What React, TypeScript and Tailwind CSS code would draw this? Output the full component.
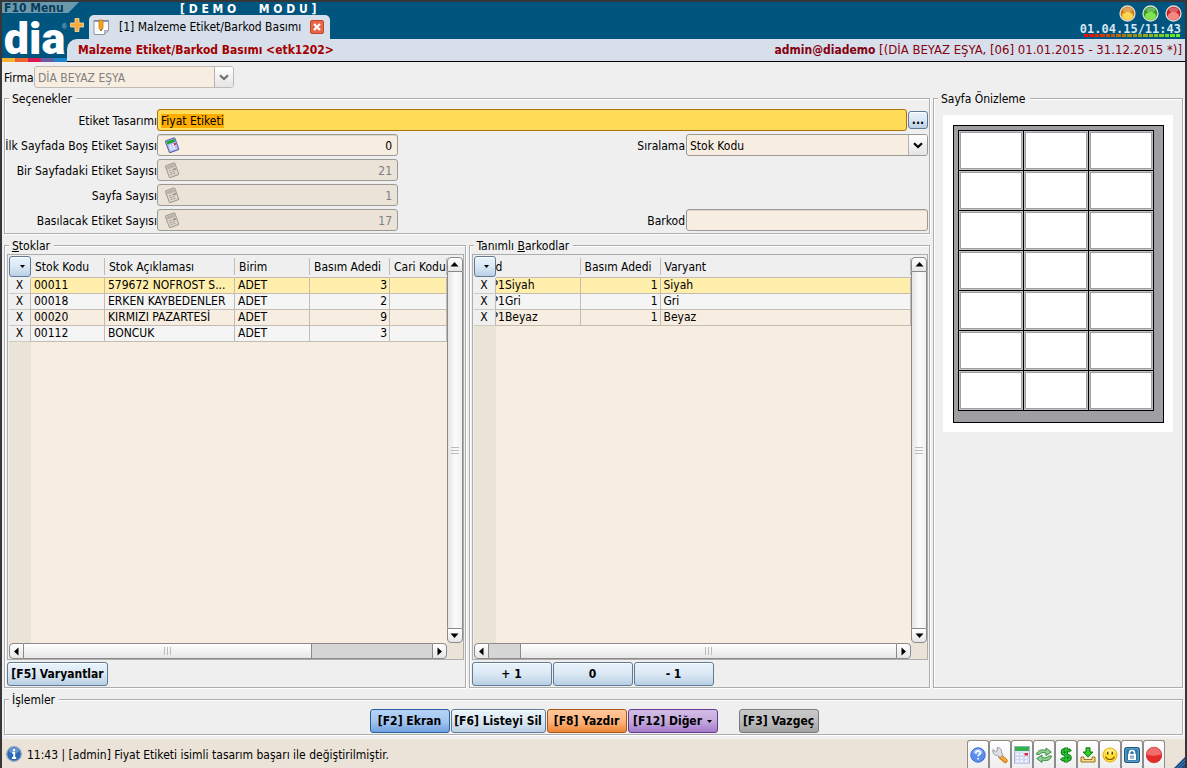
import { useEffect, useRef } from "react";
import type { ReactNode } from "react";

const bevel =
  "border border-[#adadad] shadow-[1px_1px_0_#fff,inset_1px_1px_0_#fff]";
const field =
  "h-[22px] w-full rounded-[3px] border border-[#9c9a96] outline-none";
const blueBtn =
  "rounded-[3px] border border-[#5f7a94] bg-gradient-to-b from-[#e9f3fb] via-[#dbe8f4] to-[#b9cfe4] font-bold shadow-[inset_0_1px_0_#fff]";
const label = "flex justify-end whitespace-nowrap pt-0.5";

function Group({
  title,
  className,
  children,
}: {
  title: ReactNode;
  className?: string;
  children: ReactNode;
}) {
  return (
    <fieldset className={`min-w-0 pl-0.5 pr-px ${bevel} ${className ?? ""}`}>
      <legend className="relative ml-0.5 h-[14px] bg-[#efefef] pl-[3px] pr-1 leading-[16px]">
        {title}
      </legend>
      {children}
    </fieldset>
  );
}

function NoteIcon({ muted }: { muted?: boolean }) {
  const edge = muted ? "#a09b92" : "#5560a8";
  return (
    <svg width="16" height="16" viewBox="0 0 16 16" aria-hidden="true">
      <g transform="rotate(-20 8 8)">
        <rect x="3" y="2" width="10" height="12.5" rx="1" fill={muted ? "#dcd6cb" : "#b4befa"} stroke={edge} />
        <rect x="4" y="3" width="8" height="3" fill={muted ? "#b8b3aa" : "#1ea82c"} />
        <path d="M5 8h2M8 8h2M5 10h2M8 10h2M5 12h2M8 12h2" stroke={muted ? "#aaa59b" : "#fff"} strokeWidth="1.2" />
        <path d="M10 8h2" stroke={muted ? "#918c84" : "#e0202c"} strokeWidth="2" />
      </g>
    </svg>
  );
}

function NumberRow({
  id,
  text,
  value,
  disabled,
}: {
  id: string;
  text: string;
  value: string;
  disabled?: boolean;
}) {
  return (
    <>
      <label htmlFor={id} className={label}>
        {text}
      </label>
      <div
        className={`flex items-center pl-1.5 pr-[5px] ${field} ${
          disabled
            ? "bg-[#ebe3d7] text-[#808080]"
            : "bg-[#f7eee1] text-black shadow-[inset_0_1px_0_#ddd5c8]"
        }`}
      >
        <NoteIcon muted={disabled} />
        <input
          id={id}
          defaultValue={value}
          disabled={disabled}
          className="min-w-0 flex-1 bg-transparent pt-0.5 text-right outline-none"
        />
      </div>
    </>
  );
}

const arrows = {
  up: "M2.500 8.500h8L6.500 4z",
  down: "M2.500 4.500h8L6.500 9z",
  left: "M8.500 2.500v8L4 6.500z",
  right: "M4.500 2.500v8L9 6.500z",
};

function ArrowButton({ dir, className }: { dir: keyof typeof arrows; className: string }) {
  return (
    <button
      type="button"
      aria-label={dir}
      className={`flex shrink-0 items-center justify-center border border-[#8a8a8a] from-white to-[#e6e6e6] ${className}`}
    >
      <svg width="13" height="13" viewBox="0 0 13 13" aria-hidden="true">
        <path d={arrows[dir]} fill="#000" />
      </svg>
    </button>
  );
}

function VScroll() {
  return (
    <div className="mt-0.5 flex w-4 shrink-0 flex-col">
      <ArrowButton dir="up" className="h-[15px] rounded-t-[4px] bg-gradient-to-b" />
      <div className="flex flex-1 flex-col items-center justify-center gap-0.5 border-x border-[#8a8a8a] bg-gradient-to-r from-[#e4e4e4] via-[#fbfbfb] to-[#f0f0f0]">
        <i className="h-px w-2 bg-[#bbb]" />
        <i className="h-px w-2 bg-[#bbb]" />
        <i className="h-px w-2 bg-[#bbb]" />
      </div>
      <ArrowButton dir="down" className="h-[15px] rounded-b-[4px] bg-gradient-to-b" />
    </div>
  );
}

function Thumb({ className }: { className: string }) {
  return (
    <div
      className={`flex items-center justify-center gap-0.5 bg-gradient-to-b from-white to-[#e6e6e6] ${className}`}
    >
      <i className="h-2 w-px bg-[#bbb]" />
      <i className="h-2 w-px bg-[#bbb]" />
      <i className="h-2 w-px bg-[#bbb]" />
    </div>
  );
}

function HScroll({ children }: { children: ReactNode }) {
  return (
    <div className="flex h-4 shrink-0 bg-[#ebe3d7] pr-4">
      <ArrowButton dir="left" className="w-[15px] rounded-l-[4px] bg-gradient-to-b" />
      <div className="flex flex-1 border-y border-[#8a8a8a] bg-[#d6d6d6]">{children}</div>
      <ArrowButton dir="right" className="w-[15px] rounded-r-[4px] bg-gradient-to-b" />
    </div>
  );
}

type Col = { name: string; width: string; right?: boolean };

function Grid({
  name,
  cols,
  rows,
  clipFirst,
  scroll,
}: {
  name: string;
  cols: Col[];
  rows: string[][];
  clipFirst?: boolean;
  scroll: ReactNode;
}) {
  const tones = ["bg-[#ffeeac]", "bg-[#f5f5f5]", "bg-[#f7eee1]", "bg-[#f5f5f5]"];
  return (
    <div className="flex min-h-0 flex-1 flex-col border border-[#adadad] pl-px">
      <div className="flex min-h-0 flex-1">
        <div className="flex min-w-0 flex-1 flex-col overflow-hidden bg-[#f7eee1]">
          <table aria-label={name} className="w-full table-fixed border-separate border-spacing-0">
            <colgroup>
              <col className="w-[22px]" />
              {cols.map((c) => (
                <col key={c.name} className={c.width} />
              ))}
            </colgroup>
            <thead>
              <tr className="h-[23px] bg-[#efefef]">
                <th className="p-0">
                  <button
                    type="button"
                    aria-label="Menü"
                    className={`flex h-[21px] w-[22px] items-center justify-center pl-1 ${blueBtn}`}
                  >
                    <svg width="5" height="3" viewBox="0 0 5 3" aria-hidden="true">
                      <path d="M0 0h5L2.5 3z" fill="#000" />
                    </svg>
                  </button>
                </th>
                {cols.map((c, i) => (
                  <th
                    key={c.name}
                    className="border-b border-[#c3bcb2] p-0 text-left font-normal"
                  >
                    <span
                      className={`block whitespace-nowrap border-r border-[#c3bcb2] pt-0.5 leading-[15px] ${
                        clipFirst && i === 0 ? "" : "pl-1"
                      }`}
                    >
                      {c.name}
                    </span>
                  </th>
                ))}
              </tr>
            </thead>
            <tbody>
              {rows.map((r, n) => (
                <tr key={r[0]} className={`h-4 leading-[15px] ${tones[n]}`}>
                  <td className="border-b border-r border-b-[#d0cbc2] border-r-[#c3bcb2] bg-[#f0f0f0] p-0 text-center">
                    X
                  </td>
                  {cols.map((c, i) => (
                    <td
                      key={c.name}
                      className={`overflow-hidden whitespace-nowrap border-b border-r border-[#c3bcb2] p-0 ${
                        c.right ? "pr-0.5 text-right" : clipFirst && i === 0 ? "" : "pl-[3px]"
                      }`}
                    >
                      {clipFirst && i === 0 ? <span className="-ml-1">{r[i]}</span> : r[i]}
                    </td>
                  ))}
                </tr>
              ))}
            </tbody>
          </table>
          <div className="w-[22px] flex-1 bg-[#ebe3d7]" />
        </div>
        <VScroll />
      </div>
      <HScroll>{scroll}</HScroll>
    </div>
  );
}

const statusIcons: { name: string; art: ReactNode }[] = [
  {
    name: "Yardım",
    art: (
      <>
        <circle cx="8" cy="8" r="7.2" fill="#5b8def" stroke="#3c68cf" />
        <ellipse cx="8" cy="4.8" rx="5" ry="3" fill="#a9c6fb" opacity=".6" />
        <path d="M5.8 6.2c0-3 4.600-3 4.600-.2 0 1.700-2.300 1.600-2.300 3.500M8.100 11v1.600" stroke="#fff" strokeWidth="1.700" fill="none" />
      </>
    ),
  },
  {
    name: "Ayarlar",
    art: (
      <>
        <path d="M8.500 9.500l4.800 4.200" stroke="#c97a15" strokeWidth="4.600" strokeLinecap="round" />
        <path d="M8.800 9.500l4.500 3.900" stroke="#f7a83c" strokeWidth="2.800" strokeLinecap="round" />
        <path d="M1 2.500l2.500 2.200 2-1.200L5 .7c3-.4 5 2 4.300 4.500l1.700 2.600-3 2.700-2.500-2.200C3 9 .2 6.500 1 2.500z" fill="#dfe2e6" stroke="#8a8f96" strokeWidth=".9" />
      </>
    ),
  },
  {
    name: "Hesap Makinesi",
    art: (
      <>
        <rect x=".5" y="-1" width="15" height="18" fill="#dfe4fa" stroke="#aab2dd" />
        <rect x="1" y="-.5" width="14" height="4.500" fill="#35b04a" />
        <g fill="#fff" stroke="#b6bee6" strokeWidth=".5">
          <rect x="2" y="6" width="3" height="2.500" /><rect x="6" y="6" width="3" height="2.500" />
          <rect x="2" y="9.500" width="3" height="2.500" /><rect x="6" y="9.500" width="3" height="2.500" /><rect x="10.500" y="9.500" width="3" height="2.500" />
          <rect x="2" y="13" width="3" height="2.500" /><rect x="6" y="13" width="3" height="2.500" /><rect x="10.500" y="13" width="3" height="2.500" />
        </g>
        <rect x="10.500" y="6" width="3.500" height="2.500" fill="#e8283a" />
      </>
    ),
  },
  {
    name: "Yenile",
    art: (
      <g fill="#8fce8c" stroke="#2f8440" strokeWidth=".9" strokeLinejoin="round">
        <path d="M.6 7.500C1 3.500 5.500 2 10 3.400V1l5.300 4-5.300 3.500V6.200C7 5 4.500 5.500 3.500 7.500z" />
        <path d="M15.400 9c-.4 4-4.900 5.500-9.400 4.100v2.400L.7 11.500 6 8v2.300c3 1.200 5.500.7 6.500-1.300z" />
      </g>
    ),
  },
  {
    name: "Kasa",
    art: (
      <>
        <path d="M12.500 4.500C11 2.500 4.500 2 4.500 5.300c0 3.400 7.500 1.800 7.500 5.200 0 3.500-7 3-8.500.5M8.200.5v15" fill="none" stroke="#0b6b12" strokeWidth="3.600" />
        <path d="M12.200 4.500C11 2.700 4.500 2 4.500 5.300c0 3.400 7.500 1.800 7.500 5.200 0 3.500-7 3-8.300.5M8.200 1v14" fill="none" stroke="#22c02c" strokeWidth="1.900" />
      </>
    ),
  },
  {
    name: "İndir",
    art: (
      <>
        <path d="M1 10v5h14v-5h-3v2.500H4V10z" fill="#f3d98a" stroke="#9b7415" />
        <path d="M6 .8h4V5h3L8 10.200 3 5h3z" fill="#2fc92a" stroke="#14790f" />
      </>
    ),
  },
  {
    name: "Geri Bildirim",
    art: (
      <>
        <circle cx="8" cy="8" r="7" fill="#ffdf35" stroke="#e8a812" />
        <ellipse cx="8" cy="4.500" rx="4.500" ry="2.500" fill="#fff6a8" opacity=".7" />
        <path d="M5.700 4.800v2.700M10.300 4.800v2.700" stroke="#5b4300" strokeWidth="1.500" />
        <path d="M3.500 9.500c1.500 4 7.500 4 9 0" fill="none" stroke="#8a5a00" strokeWidth="1.100" />
      </>
    ),
  },
  {
    name: "Kilitle",
    art: (
      <>
        <rect x=".5" y=".5" width="15" height="15" rx="2" fill="#2c78a8" stroke="#1a587f" />
        <rect x="1.800" y="1.800" width="12.400" height="12.400" rx="1" fill="none" stroke="#8bbbd8" strokeWidth=".7" />
        <path d="M5.500 7.500V5.800c0-3 5-3 5 0v1.700" fill="none" stroke="#fff" strokeWidth="1.600" />
        <rect x="4" y="7" width="8" height="6" fill="#fff" />
        <path d="M6 9.200h4M6 11h4" stroke="#2c78a8" strokeWidth=".9" />
      </>
    ),
  },
  {
    name: "Kayıt",
    art: (
      <>
        <circle cx="8" cy="8" r="7.800" fill="#e52a2a" stroke="#c62020" strokeWidth=".6" />
        <path d="M1 7.500a7 7 0 0 1 14 0c-4 1.500-10 1.500-14 0z" fill="#f58a8a" opacity=".7" />
      </>
    ),
  },
];

function Ball({ dark, light, name }: { dark: string; light: string; name: string }) {
  return (
    <button type="button" aria-label={name}>
      <svg width="17" height="17" viewBox="0 0 17 17" aria-hidden="true">
        <circle cx="8.500" cy="8.500" r="7.500" fill={dark} stroke="#dcdcd4" strokeWidth="1.300" />
        <ellipse cx="8.500" cy="11" rx="5.500" ry="4" fill={light} opacity=".85" />
        <ellipse cx="8.500" cy="5" rx="4.500" ry="2.500" fill="#fff" opacity=".3" />
      </svg>
    </button>
  );
}

const meter = [
  "bg-[#ee0c00]", "bg-[#e61400]", "bg-[#dd2200]", "bg-[#d23a08]", "bg-[#c84c0a]", "bg-[#bd5c10]",
  "bg-[#b36c12]", "bg-[#aa7a16]", "bg-[#a28818]", "bg-[#98921a]", "bg-[#929c1c]", "bg-[#90a81e]",
  "bg-[#8ab420]", "bg-[#82c022]", "bg-[#7acc24]", "bg-[#70d826]", "bg-[#68e428]", "bg-[#5cf02c]",
];

function Header() {
  return (
    <header className="flex h-[60px] shrink-0 bg-[#00557f]">
      <div className="flex w-[65px] shrink-0 flex-col">
        <button
          type="button"
          className="relative z-10 h-[11px] w-[77px] whitespace-nowrap bg-[#6d99ae] pl-0.5 text-left font-bold leading-[12px] text-[#063c58] [clip-path:polygon(0_0,100%_0,86%_100%,0_100%)]"
        >
          F10 Menu
        </button>
        <div className="relative flex h-[45px] justify-center font-['Roboto',sans-serif] text-[45px] font-black leading-[51px] text-white">
          dia
          <span className="absolute right-0 top-2.5 font-['Liberation_Sans',sans-serif] text-[7px] font-normal leading-[7px] text-[#a9c7d8]">
            ®
          </span>
        </div>
        <div className="flex h-1">
          <i className="flex-1 bg-[#f9b233]" />
          <i className="flex-1 bg-[#f0652f]" />
          <i className="flex-1 bg-[#d81b52]" />
          <i className="flex-1 bg-[#6d5aa5]" />
          <i className="flex-1 bg-[#1f86cc]" />
        </div>
      </div>
      <div className="flex min-w-0 flex-1 flex-col">
        <div className="flex h-[37px]">
          <div className="flex flex-1 flex-col">
            <div className="h-[13px] whitespace-pre pl-[113px] font-bold leading-[15px] text-white">
              {"[ D E M O      M O D U ]"}
            </div>
            <div className="flex flex-1">
              <button type="button" aria-label="Yeni Sekme" className="w-[22px] pb-1 pl-0.5">
                <svg width="16" height="16" viewBox="0 0 16 16" aria-hidden="true">
                  <path d="M6 1.500h4v4.500h4.500v4H10v4.500H6v-4.500H1.500V6H6z" fill="#f9a93a" stroke="#ffe0a8" strokeWidth=".8" />
                </svg>
              </button>
              <div className="flex w-[241px] items-center rounded-t-[5px] bg-[#d7dfea] pl-1">
                <svg width="17" height="17" viewBox="0 0 17 17" aria-hidden="true">
                  <path d="M1 1.500h14.500v10l-4 4H1z" fill="#fdfdfd" stroke="#8c97a8" />
                  <path d="M1 2h14.500" stroke="#6d83a8" strokeWidth="1.500" />
                  <path d="M15.500 11.500h-4v4z" fill="#c8ced8" stroke="#8c97a8" strokeWidth=".8" />
                  <path d="M6 1h4v8l-2 3-2-3z" fill="#f7a51d" stroke="#b56f08" strokeWidth=".7" />
                  <path d="M7.300 10.500h1.400L8 12z" fill="#222" />
                </svg>
                <span className="ml-[9px] flex-1 whitespace-nowrap">[1] Malzeme Etiket/Barkod Basımı</span>
                <button
                  type="button"
                  aria-label="Kapat"
                  className="mr-1.5 flex size-[14px] items-center justify-center rounded-[2px] border border-[#c4452a] bg-[#e5674a]"
                >
                  <svg width="8" height="8" viewBox="0 0 8 8" aria-hidden="true">
                    <path d="M1 1l6 6M7 1L1 7" stroke="#fff" strokeWidth="2.200" />
                  </svg>
                </button>
              </div>
            </div>
          </div>
          <div className="flex w-[104px] flex-col items-end pt-[3px]">
            <div className="flex gap-[6px] pr-[3px]">
              <Ball name="Küçült" dark="#d97a12" light="#ffe85c" />
              <Ball name="Büyüt" dark="#2f9a1c" light="#8ef05a" />
              <Ball name="Kapat" dark="#c81f26" light="#ff9a94" />
            </div>
            <time className="h-3 pr-1 font-['DejaVu_Sans_Mono',monospace] text-[12px] font-bold leading-[15px] text-[#d3e6f5]">
              01.04.15/11:43
            </time>
            <div className="mr-[5px] flex w-24 gap-px">
              {meter.map((c) => (
                <i key={c} className={`h-[3px] flex-1 ${c}`} />
              ))}
            </div>
          </div>
        </div>
        <div className="flex flex-1 items-center justify-between whitespace-nowrap rounded-tl-[10px] border-b border-black bg-[#d7dfea] pl-[11px] pr-[3px]">
          <h1 className="font-bold text-[#a40000]">Malzeme Etiket/Barkod Basımı &lt;etk1202&gt;</h1>
          <p className="text-[13px] text-[#840010]">
            <b className="text-[12px]">admin@diademo</b> [(DİA BEYAZ EŞYA, [06] 01.01.2015 - 31.12.2015 *)]
          </p>
        </div>
      </div>
    </header>
  );
}

function Chevron({ color }: { color: string }) {
  return (
    <span className="pointer-events-none absolute bottom-px right-px top-px flex w-[19px] items-center justify-center rounded-r-[2px] border-l border-[#b5b2ad] bg-gradient-to-b from-white to-[#e4e4e4]">
      <svg width="10" height="7" viewBox="0 0 10 7" aria-hidden="true">
        <path d="M1 1.200l4 3.800 4-3.800" fill="none" stroke={color} strokeWidth="2.200" />
      </svg>
    </span>
  );
}

export default function App() {
  const design = useRef<HTMLInputElement>(null);
  useEffect(() => {
    design.current?.focus();
    design.current?.select();
  }, []);

  return (
    <div className="flex min-h-screen flex-col border-x-2 border-t-2 border-[#37373a] bg-[#efefef] font-['DejaVu_Sans_Condensed','DejaVu_Sans',sans-serif] text-[12px] leading-[14px] text-black">
      <Header />
      <main className="flex flex-1 flex-col px-0.5 pb-1">
        <div className="flex h-[29px] shrink-0 items-center pb-px pt-0.5">
          <label htmlFor="firma" className="w-[30px] pt-px">
            Firma
          </label>
          <div className="relative w-[200px]">
            <select
              id="firma"
              disabled
              className={`appearance-none border-[#c0bcb5] bg-[#f7eee1] pl-[3px] pt-px text-[#808080] opacity-100 ${field}`}
            >
              <option>DİA BEYAZ EŞYA</option>
            </select>
            <Chevron color="#707070" />
          </div>
        </div>

        <div className="flex flex-1 gap-[3px]">
          <div className="flex min-w-0 flex-1 flex-col gap-1">
            <Group title="Seçenekler" className="shrink-0 pb-0.5 pt-1">
              <div className="grid grid-cols-[150px_minmax(0,241fr)_minmax(0,288fr)_minmax(0,242fr)] items-center gap-y-[3px]">
                <label htmlFor="tasarim" className={label}>
                  Etiket Tasarımı
                </label>
                <div className="col-span-3 flex items-center gap-px">
                  <input
                    id="tasarim"
                    ref={design}
                    defaultValue="Fiyat Etiketi"
                    className={`min-w-0 flex-1 border-[#b0730c] bg-[#ffdc57] px-[3px] pt-px selection:bg-[#ffae00fe] selection:text-black ${field}`}
                  />
                  <button type="button" aria-label="Seç" className={`h-[18px] w-5 leading-[16px] ${blueBtn}`}>
                    ...
                  </button>
                </div>

                <NumberRow id="bos" text="İlk Sayfada Boş Etiket Sayısı" value="0" />
                <label htmlFor="siralama" className={`pr-px ${label}`}>
                  Sıralama
                </label>
                <div className="relative">
                  <select id="siralama" className={`appearance-none bg-[#f7eee1] pl-[3px] pt-px ${field}`}>
                    <option>Stok Kodu</option>
                  </select>
                  <Chevron color="#000" />
                </div>

                <NumberRow id="sayfadaki" text="Bir Sayfadaki Etiket Sayısı" value="21" disabled />
                <span className="col-span-2" />
                <NumberRow id="sayfa" text="Sayfa Sayısı" value="1" disabled />
                <span className="col-span-2" />
                <NumberRow id="basilacak" text="Basılacak Etiket Sayısı" value="17" disabled />
                <label htmlFor="barkod" className={`pr-px ${label}`}>
                  Barkod
                </label>
                <input id="barkod" className={`bg-[#f7eee1] px-[3px] shadow-[inset_0_1px_0_#ddd5c8] ${field}`} />
              </div>
            </Group>

            <div className="flex flex-1 gap-[3px]">
              <Group
                title={
                  <>
                    <u>S</u>toklar
                  </>
                }
                className="flex flex-1 flex-col pb-px pt-0.5"
              >
                <div className="flex h-full flex-1 flex-col">
                  <Grid
                    name="Stoklar"
                    cols={[
                      { name: "Stok Kodu", width: "w-[74px]" },
                      { name: "Stok Açıklaması", width: "w-[130px]" },
                      { name: "Birim", width: "w-[75px]" },
                      { name: "Basım Adedi", width: "w-[80px]", right: true },
                      { name: "Cari Kodu", width: "w-auto" },
                    ]}
                    rows={[
                      ["00011", "579672 NOFROST S...", "ADET", "3", ""],
                      ["00018", "ERKEN KAYBEDENLER", "ADET", "2", ""],
                      ["00020", "KIRMIZI PAZARTESİ", "ADET", "9", ""],
                      ["00112", "BONCUK", "ADET", "3", ""],
                    ]}
                    scroll={
                      <>
                        <Thumb className="flex-[289] border-r border-[#8a8a8a]" />
                        <i className="flex-[120]" />
                      </>
                    }
                  />
                  <div className="flex pt-0.5">
                    <button type="button" className={`h-6 w-[101px] whitespace-nowrap ${blueBtn}`}>
                      [F5] Varyantlar
                    </button>
                  </div>
                </div>
              </Group>

              <Group
                title={
                  <>
                    Tanımlı <u>B</u>arkodlar
                  </>
                }
                className="flex flex-1 flex-col pb-px pt-0.5"
              >
                <div className="flex h-full flex-1 flex-col">
                  <Grid
                    name="Tanımlı Barkodlar"
                    clipFirst
                    cols={[
                      { name: "d", width: "w-[85px]" },
                      { name: "Basım Adedi", width: "w-[80px]", right: true },
                      { name: "Varyant", width: "w-auto" },
                    ]}
                    rows={[
                      ["P1Siyah", "1", "Siyah"],
                      ["P1Gri", "1", "Gri"],
                      ["P1Beyaz", "1", "Beyaz"],
                    ]}
                    scroll={
                      <>
                        <i className="flex-[32]" />
                        <Thumb className="flex-[376] border-l border-[#8a8a8a]" />
                      </>
                    }
                  />
                  <div className="flex gap-px pt-0.5">
                    {["+ 1", "0", "- 1"].map((t) => (
                      <button key={t} type="button" className={`h-6 w-20 ${blueBtn}`}>
                        {t}
                      </button>
                    ))}
                  </div>
                </div>
              </Group>
            </div>
          </div>

          <Group title="Sayfa Önizleme" className="w-[250px] shrink-0">
            <div className="ml-[7px] mt-2.5 w-[230px] bg-white py-2.5 pb-[9px] pl-2.5 pr-[9px]">
              <div className="border border-black bg-[#9f9ea3] pb-[11px] pl-1 pr-[9px] pt-1">
                <div className="grid grid-cols-3 gap-px border border-black bg-black">
                  {Array.from({ length: 21 }, (_, i) => (
                    <div key={i} className="h-[39px] border border-[#c2c2c2] bg-[#9f9ea3] p-px">
                      <div className="h-full bg-white" />
                    </div>
                  ))}
                </div>
              </div>
            </div>
          </Group>
        </div>

        <Group title="İşlemler" className="mt-1 shrink-0 pb-px pt-[3px]">
          <div className="flex justify-center gap-px whitespace-nowrap">
            <button
              type="button"
              className="h-6 w-20 rounded-[3px] border border-[#2d5c9c] bg-gradient-to-b from-[#b4d2f6] via-[#a5c6f0] to-[#72a3df] font-bold"
            >
              [F2] Ekran
            </button>
            <button type="button" className={`h-6 w-[95px] ${blueBtn}`}>
              [F6] Listeyi Sil
            </button>
            <button
              type="button"
              className="h-6 w-20 rounded-[3px] border border-[#a8571a] bg-gradient-to-b from-[#ffc799] via-[#fdb57c] to-[#ee8632] font-bold"
            >
              [F8] Yazdır
            </button>
            <button
              type="button"
              className="flex h-6 w-[90px] items-center justify-center gap-[5px] rounded-[3px] border border-[#65398f] bg-gradient-to-b from-[#d3bde6] via-[#c5a9dd] to-[#a57ccb] font-bold"
            >
              [F12] Diğer
              <svg width="5" height="3" viewBox="0 0 5 3" aria-hidden="true">
                <path d="M0 0h5L2.500 3z" fill="#000" />
              </svg>
            </button>
            <button
              type="button"
              className="ml-5 h-6 w-20 rounded-[3px] border border-[#7c7c7c] bg-gradient-to-b from-[#c9c9c9] via-[#bdbdbd] to-[#a2a2a2] font-bold"
            >
              [F3] Vazgeç
            </button>
          </div>
        </Group>
      </main>

      <footer className="flex h-[29px] shrink-0 items-center bg-[#ebe3d7] pl-1">
        <svg width="16" height="16" viewBox="0 0 16 16" aria-hidden="true">
          <circle cx="8" cy="8" r="7.300" fill="#2d68b4" stroke="#8fa7c4" strokeWidth="1.200" />
          <ellipse cx="8" cy="4.500" rx="5" ry="3" fill="#8db4e6" opacity=".6" />
          <path d="M8 3v2M6.300 6.800h1.900v5M6 12h4.200" stroke="#fff" strokeWidth="1.900" fill="none" />
        </svg>
        <p className="ml-[5px] flex-1 pt-0.5">
          11:43 | [admin] Fiyat Etiketi isimli tasarım başarı ile değiştirilmiştir.
        </p>
        <div className="flex h-full pt-px">
          {statusIcons.map((s) => (
            <button
              key={s.name}
              type="button"
              aria-label={s.name}
              className="flex w-[22px] items-center justify-center rounded-t-[3px] border border-b-0 border-[#8c8c8c] bg-gradient-to-b from-white to-[#eeeeee]"
            >
              <svg width="16" height="18" viewBox="0 -1 16 18" aria-hidden="true">
                {s.art}
              </svg>
            </button>
          ))}
        </div>
        <svg className="ml-[9px] self-end" width="11" height="11" viewBox="0 0 11 11" aria-hidden="true">
          <path d="M0 11L11 0v11z" fill="#1d4f86" />
          <path d="M3 11l8-8M6 11l5-5" stroke="#4a7fb8" strokeWidth="1" />
        </svg>
      </footer>
    </div>
  );
}
